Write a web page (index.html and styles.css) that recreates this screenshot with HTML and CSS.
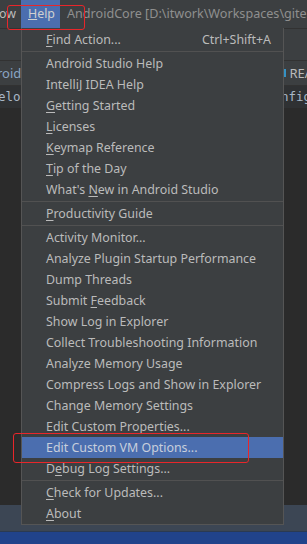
FILE: index.html
```html
<!DOCTYPE html>
<html lang="en">
<head>
  <meta charset="UTF-8" />
  <meta name="viewport" content="width=device-width, initial-scale=1.0" />
  <title>Help menu</title>
  <link rel="stylesheet" href="styles.css">
</head>
<body>
  <div class="ide">
    <div class="menubar">
      <span class="menu-prev">ow</span>
      <span class="menu-help"><u>H</u>elp</span>
      <span class="title">AndroidCore [D:\itwork\Workspaces\gite</span>
    </div>
    <div class="toolbar"></div>
    <div class="navbar">
      <span class="nav-left">roid</span>
      <span class="nav-right"><i class="nav-mark"></i>REA</span>
    </div>
    <div class="tabs">
      <span class="tab-left">elop</span>
      <span class="tab-right">nfig</span>
    </div>
    <div class="editor"></div>
    <div class="toolwin"></div>
    <div class="statusbar"></div>
  </div>

  <div class="popup">
    <div class="item split"><span><u>F</u>ind Action...</span><span class="key">Ctrl+Shift+A</span></div>
    <div class="sep"></div>
    <div class="item">Android Studio Help</div>
    <div class="item">IntelliJ IDEA Help</div>
    <div class="item"><u>G</u>etting Started</div>
    <div class="item"><u>L</u>icenses</div>
    <div class="item"><u>K</u>eymap Reference</div>
    <div class="item"><u>T</u>ip of the Day</div>
    <div class="item">What's <u>N</u>ew in Android Studio</div>
    <div class="sep"></div>
    <div class="item"><u>P</u>roductivity Guide</div>
    <div class="sep"></div>
    <div class="item">Activity Monitor...</div>
    <div class="item">Analyze Plugin Startup Performance</div>
    <div class="item">Dump Threads</div>
    <div class="item">Submit <u>F</u>eedback</div>
    <div class="item">Show Log in Explorer</div>
    <div class="item">Collect Troubleshooting Information</div>
    <div class="item">Analyze Memory Usage</div>
    <div class="item">Compress Logs and Show in Explorer</div>
    <div class="item">Change Memory Settings</div>
    <div class="item">Edit Custom Properties...</div>
    <div class="item active">Edit Custom VM Options...</div>
    <div class="item">D<u>e</u>bug Log Settings...</div>
    <div class="sep"></div>
    <div class="item"><u>C</u>heck for Updates...</div>
    <div class="item"><u>A</u>bout</div>
  </div>

  <div class="mark mark-help"></div>
  <div class="mark mark-vm"></div>
</body>
</html>
```

FILE: styles.css
```css
body {
  margin: 0;
  width: 307px;
  height: 544px;
  overflow: hidden;
  font-family: 'Noto Sans', 'Open Sans', sans-serif;
  font-size: 12.4px;
  color: #bbbbbb;
  background: #2b2b2b;
  position: relative;
}

.ide {
  display: flex;
  flex-direction: column;
  height: 544px;
}

.menubar {
  height: 28px;
  background: #3c3f41;
  border-bottom: 1px solid #323232;
  display: flex;
  align-items: stretch;
  white-space: nowrap;
  overflow: hidden;
}

.menu-prev {
  flex-shrink: 0;
  line-height: 28px;
  margin-left: -1px;
  width: 22px;
}

.menu-help {
  flex-shrink: 0;
  line-height: 28px;
  width: 39px;
  box-sizing: border-box;
  background: #4b6eaf;
  color: #d0d0d0;
  padding-left: 7px;
}

.title {
  line-height: 28px;
  margin-left: 7px;
  color: #8f8f8f;
  font-size: 12.6px;
}

.toolbar {
  height: 31px;
  background: #3c3f41;
}

.navbar {
  height: 24px;
  background: #3c3f41;
  border-top: 1px solid #323232;
  border-bottom: 1px solid #323232;
  display: flex;
  justify-content: space-between;
  line-height: 24px;
  font-size: 13px;
  overflow: hidden;
}

.nav-left {
  margin-left: -3px;
  color: #8aa5c4;
}

.nav-right {
  display: flex;
  align-items: center;
  gap: 3px;
  margin-right: -6px;
}

.nav-mark {
  width: 4px;
  height: 8px;
  background: #3592c4;
}

.tabs {
  height: 22px;
  background: #2f3133;
  display: flex;
  justify-content: space-between;
  line-height: 22px;
  font-family: 'DejaVu Sans Mono', monospace;
  font-size: 12.5px;
  color: #a9b7c6;
  overflow: hidden;
}

.tab-left {
  margin-left: -2px;
}

.tab-right {
  margin-right: -4px;
}

.editor {
  flex: 1;
  background: #2b2b2b;
}

.toolwin {
  height: 26px;
  background: #3c4654;
  border-bottom: 1px solid #2b3a52;
}

.statusbar {
  height: 12px;
  background: #21438b;
}

.popup {
  position: absolute;
  left: 21px;
  top: 28px;
  width: 263px;
  box-sizing: border-box;
  background: #3c3f41;
  border: 1px solid #555555;
  border-top: none;
  padding-top: 1px;
}

.item {
  height: 21px;
  line-height: 21px;
  padding: 0 12px 0 24px;
  white-space: nowrap;
}

.item.split {
  display: flex;
  justify-content: space-between;
}

.item u {
  text-underline-offset: 2px;
}

.item.active {
  background: #4b6eaf;
  color: #c8cfdc;
}

.sep {
  height: 1px;
  margin: 1px 0;
  background: #515151;
}

.mark {
  position: absolute;
  border: 1.5px solid #e8262a;
  border-radius: 3px;
}

.mark-help {
  left: 7px;
  top: 5px;
  width: 76px;
  height: 23px;
}

.mark-vm {
  left: 13px;
  top: 433px;
  width: 234px;
  height: 28px;
}
```
